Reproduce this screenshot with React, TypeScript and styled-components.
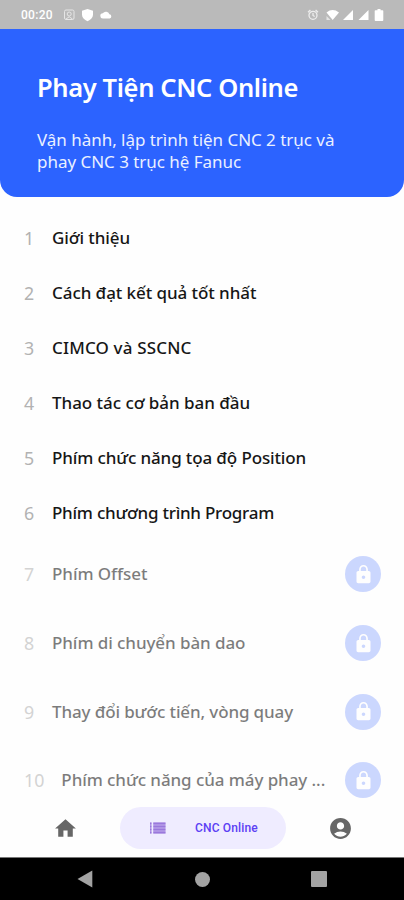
import React from 'react';
import styled, { createGlobalStyle } from 'styled-components';
import { MdLock, MdHome, MdAccountCircle } from 'react-icons/md';

const Global = createGlobalStyle`
  * { box-sizing: border-box; }
  body { margin: 0; background: #fff; font-family: "Noto Sans", sans-serif; }
`;

const Screen = styled.div`
  width: 404px;
  height: 900px;
  display: flex;
  flex-direction: column;
  overflow: hidden;
  background: #fefefe;
`;

const StatusBar = styled.header`
  flex: none;
  height: 29px;
  padding: 1px 20px 0 21px;
  display: flex;
  align-items: center;
  justify-content: space-between;
  background: #bababa;
  color: #fff;
`;

const StatusGroup = styled.div`
  display: flex;
  align-items: center;
`;

const Clock = styled.span`
  width: 32px;
  margin-right: 10px;
  font: 500 12px/14px Roboto, sans-serif;
  letter-spacing: 0.3px;
`;

const Banner = styled.section`
  flex: none;
  height: 168px;
  padding: 41px 37px 0;
  border-radius: 0 0 17px 17px;
  background: #2c63ff;
  color: #fff;
`;

const Title = styled.h1`
  margin: 0;
  font-size: 25.5px;
  line-height: 34px;
  font-weight: 600;
  letter-spacing: -0.37px;
  white-space: nowrap;
`;

const Summary = styled.p`
  margin: 25px 0 0;
  font-size: 17px;
  line-height: 22px;
  letter-spacing: -0.03px;
  color: #eaf0ff;
  white-space: nowrap;
`;

const LessonList = styled.main`
  flex: 1;
  min-height: 0;
  padding: 13px 23px 0 24px;
  overflow: hidden;
`;

const LessonRow = styled.div<{ $locked: boolean }>`
  height: ${p => (p.$locked ? 68.7 : 55)}px;
  display: flex;
  align-items: center;
  font-size: 17px;
  line-height: 24px;
  opacity: ${p => (p.$locked ? 0.56 : 1)};
`;

const LessonNumber = styled.span`
  flex: none;
  min-width: 11px;
  margin-right: 17px;
  font-size: 17.8px;
  color: #b2b2b2;
`;

const LessonName = styled.span<{ $tracking: number }>`
  flex: 1;
  font-weight: 500;
  letter-spacing: ${p => p.$tracking}px;
  color: #161616;
  white-space: nowrap;
`;

const LockBadge = styled.span`
  flex: none;
  width: 36px;
  height: 36px;
  display: grid;
  place-items: center;
  border-radius: 50%;
  background: #a5b9ff;
  color: #fff;
`;

const TabBar = styled.nav`
  flex: none;
  height: 58px;
  padding: 0 51px 0 53px;
  display: flex;
  align-items: center;
  justify-content: space-between;
  background: #fefefe;
  color: #676767;
`;

const Tab = styled.div`
  width: 25px;
  height: 25px;
`;

const ActiveTab = styled.div`
  width: 166px;
  height: 42px;
  padding-left: 29px;
  display: flex;
  align-items: center;
  gap: 29px;
  border-radius: 21px;
  background: #efecff;
  color: #5c40f4;
  font: 500 12px/16px Roboto, sans-serif;
  letter-spacing: 0.15px;
  white-space: nowrap;
`;

const SystemBar = styled.footer`
  flex: none;
  height: 43px;
  padding: 0 77px;
  display: flex;
  align-items: center;
  justify-content: space-between;
  border-top: 1px solid #777;
  background: #000;
`;

type Lesson = { name: string; tracking: number; locked?: boolean };

const lessons: Lesson[] = [
  { name: 'Giới thiệu', tracking: -0.09 },
  { name: 'Cách đạt kết quả tốt nhất', tracking: -0.07 },
  { name: 'CIMCO và SSCNC', tracking: 0.16 },
  { name: 'Thao tác cơ bản ban đầu', tracking: -0.04 },
  { name: 'Phím chức năng tọa độ Position', tracking: -0.13 },
  { name: 'Phím chương trình Program', tracking: -0.25 },
  { name: 'Phím Offset', tracking: -0.06, locked: true },
  { name: 'Phím di chuyển bàn dao', tracking: -0.08, locked: true },
  { name: 'Thay đổi bước tiến, vòng quay', tracking: -0.13, locked: true },
  { name: 'Phím chức năng của máy phay ...', tracking: -0.08, locked: true },
];

const NotificationIcons = () => (
  <svg width="50" height="14" viewBox="0 0 50 14" fill="none">
    <rect x="1.5" y="2" width="9.5" height="9.5" rx="1.5" stroke="#e6e6e6" />
    <circle cx="6.2" cy="6" r="2" stroke="#e6e6e6" />
    <path d="M3 11 6.2 8.8 9.5 11" stroke="#e6e6e6" />
    <path d="M24.5 1 30 2.8V6.5C30 9.6 27.7 12 24.5 13.2 21.3 12 19 9.6 19 6.5V2.8Z" fill="#fff" />
    <path d="M40 10.5a2.6 2.6 0 0 1-.2-5.2 3.7 3.7 0 0 1 6.6.9 2.2 2.2 0 0 1 .3 4.3Z" fill="#fff" />
  </svg>
);

const SignalIcons = () => (
  <svg width="78" height="14" viewBox="0 0 78 14">
    <g fill="none" stroke="#ededed" strokeWidth="1.3">
      <circle cx="7" cy="7.3" r="4" />
      <path d="M7 5v2.5l1.7 1M2 4.2 4.4 2M12 4.2 9.6 2" />
    </g>
    <g fill="#fff">
      <path d="M20.5 4.5Q26.5-.3 33 4.5L26.7 12Z" />
      <path d="M20.5 8v4h4Z" opacity=".6" />
      <path d="M47 2v10H37Z" />
      <path d="M62.5 2v10h-10Z" />
      <path d="M69.5 2.2h2V1h3v1.2h2c.5 0 .8.3.8.8v9c0 .6-.3 1-.8 1h-7c-.5 0-.8-.4-.8-1V3c0-.5.3-.8.8-.8Z" />
    </g>
  </svg>
);

const ListIcon = () => (
  <svg width="17" height="12" viewBox="0 0 17 12">
    <path d="M4.3.5h12.2v11H4.3zM1 .5h1.5v11H1z" fill="#c5b1ee" />
    <path
      d="M1 .5h1.5v2H1zM1 3.5h1.5v2H1zM1 6.5h1.5v2H1zM1 9.5h1.5v2H1zM4.3.5h12.2v2H4.3zM4.3 3.5h12.2v2H4.3zM4.3 6.5h12.2v2H4.3zM4.3 9.5h12.2v2H4.3z"
      fill="#9a78dc"
    />
  </svg>
);

const BackIcon = () => (
  <svg width="16" height="18" viewBox="0 0 16 18">
    <path d="M15.3.5v17L.5 9Z" fill="#a3a3a3" />
  </svg>
);

const HomeButton = styled.span`
  width: 15px;
  height: 15px;
  margin-left: 25px;
  margin-right: 24px;
  border-radius: 50%;
  background: #a3a3a3;
`;

const RecentsButton = styled.span`
  width: 16px;
  height: 16px;
  border-radius: 1px;
  background: #a3a3a3;
`;

export default function App() {
  return (
    <Screen>
      <Global />
      <StatusBar>
        <StatusGroup>
          <Clock>00:20</Clock>
          <NotificationIcons />
        </StatusGroup>
        <StatusGroup>
          <SignalIcons />
        </StatusGroup>
      </StatusBar>
      <Banner>
        <Title>Phay Tiện CNC Online</Title>
        <Summary>
          Vận hành, lập trình tiện CNC 2 trục và
          <br />
          phay CNC 3 trục hệ Fanuc
        </Summary>
      </Banner>
      <LessonList>
        {lessons.map((lesson, index) => (
          <LessonRow key={lesson.name} $locked={!!lesson.locked}>
            <LessonNumber>{index + 1}</LessonNumber>
            <LessonName $tracking={lesson.tracking}>{lesson.name}</LessonName>
            {lesson.locked && (
              <LockBadge>
                <MdLock size={21} />
              </LockBadge>
            )}
          </LessonRow>
        ))}
      </LessonList>
      <TabBar>
        <Tab>
          <MdHome size={25} />
        </Tab>
        <ActiveTab>
          <ListIcon />
          CNC Online
        </ActiveTab>
        <Tab>
          <MdAccountCircle size={25} />
        </Tab>
      </TabBar>
      <SystemBar>
        <BackIcon />
        <HomeButton />
        <RecentsButton />
      </SystemBar>
    </Screen>
  );
}
